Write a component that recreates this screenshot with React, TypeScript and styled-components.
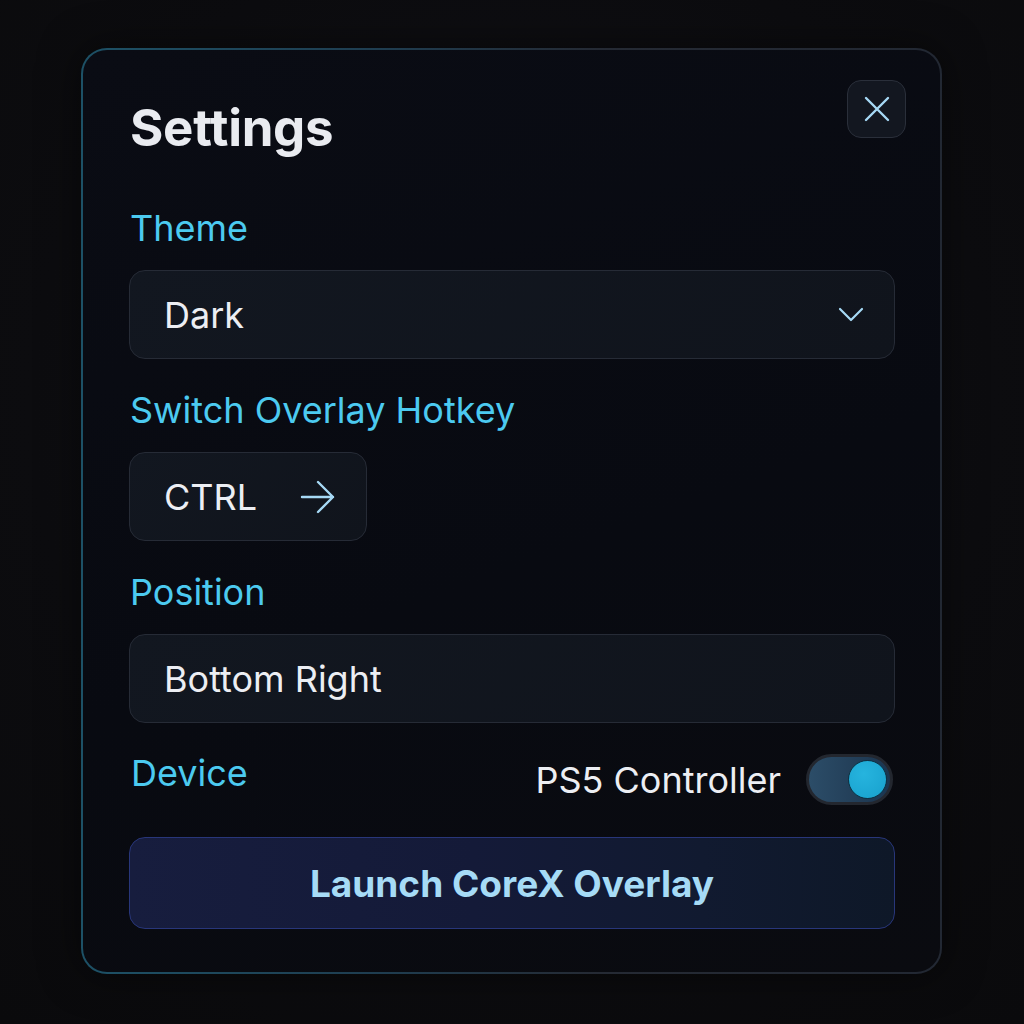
import styled, { createGlobalStyle } from "styled-components";

const GlobalStyle = createGlobalStyle`
  html, body {
    margin: 0;
    padding: 0;
    background: #0c0c0f;
  }
  body {
    font-family: Inter, "Noto Sans", "Liberation Sans", sans-serif;
    -webkit-font-smoothing: antialiased;
  }
`;

const S = {
  Page: styled.div`
    width: 1024px;
    height: 1024px;
    padding: 48px 0 0 81px;
    box-sizing: border-box;
    background: radial-gradient(circle at 50% 40%, #111116 0%, #0c0c0f 60%, #0a0a0c 100%);
  `,
  Card: styled.div`
    position: relative;
    width: 861px;
    height: 926px;
    box-sizing: border-box;
    padding: 48px 45px 0 46px;
    border-radius: 26px;
    border: 2px solid transparent;
    background:
      linear-gradient(160deg, #0a0c14 0%, #080a11 55%, #0a0b10 100%) padding-box,
      linear-gradient(90deg, #1d5166 0%, #1f3d50 35%, #252a34 60%, #222833 100%) border-box;
    box-shadow: 0 0 40px rgba(0, 0, 0, 0.5);
  `,
  Title: styled.h1`
    margin: 0 0 0 1px;
    font-size: 51px;
    line-height: 60px;
    font-weight: 700;
    letter-spacing: -0.3px;
    color: #e9ebf0;
  `,
  CloseButton: styled.button`
    position: absolute;
    top: 30px;
    right: 34px;
    width: 59px;
    height: 58px;
    display: flex;
    align-items: center;
    justify-content: center;
    padding: 0;
    border-radius: 14px;
    border: 1.5px solid #2a2f3a;
    background: #131720;
    cursor: pointer;
  `,
  Label: styled.div<{ $top: number }>`
    margin-top: ${(p) => p.$top}px;
    padding-left: 1px;
    font-size: 36px;
    line-height: 44px;
    font-weight: 400;
    color: #4ccaf0;
  `,
  Field: styled.div<{ $width?: number }>`
    margin-top: 20px;
    width: ${(p) => (p.$width ? `${p.$width}px` : "100%")};
    height: 89px;
    box-sizing: border-box;
    display: flex;
    align-items: center;
    justify-content: space-between;
    padding: 0 30px 0 34px;
    border-radius: 16px;
    border: 1.5px solid #262b36;
    background: linear-gradient(135deg, #121720 0%, #10141c 100%);
    font-size: 36px;
    color: #eceef3;
  `,
  DeviceRow: styled.div`
    margin-top: 28px;
    display: flex;
    align-items: flex-start;
    justify-content: space-between;
  `,
  DeviceLabel: styled.div`
    padding-left: 2px;
    font-size: 36px;
    line-height: 44px;
    color: #4ccaf0;
  `,
  DeviceRight: styled.div`
    margin-top: 3px;
    margin-right: 2px;
    display: flex;
    align-items: center;
    gap: 25px;
  `,
  DeviceName: styled.span`
    font-size: 36px;
    line-height: 44px;
    color: #eceef3;
  `,
  Toggle: styled.div`
    width: 87px;
    height: 51px;
    box-sizing: border-box;
    border-radius: 26px;
    border: 3px solid #23272f;
    background: linear-gradient(90deg, #2c4d68 0%, #233f59 55%, #1b3550 100%);
    display: flex;
    align-items: center;
    justify-content: flex-end;
    padding-right: 3px;
  `,
  Knob: styled.div`
    width: 39px;
    height: 39px;
    box-sizing: border-box;
    border-radius: 50%;
    border: 1.5px solid #0b3244;
    background: radial-gradient(circle at 40% 35%, #26b4de 0%, #1ca6d2 70%, #1a9cc6 100%);
  `,
  LaunchButton: styled.button`
    margin-top: 32px;
    width: 100%;
    height: 92px;
    border-radius: 16px;
    border: 1.5px solid #28367a;
    background: linear-gradient(90deg, #171d3e 0%, #141a38 45%, #111a30 75%, #0e1828 100%);
    font-family: inherit;
    font-size: 37px;
    font-weight: 700;
    color: #a6dbf6;
    cursor: pointer;
  `,
};

function CloseIcon() {
  return (
    <svg width="26" height="26" viewBox="0 0 26 26" fill="none">
      <path d="M2 2 L24 24 M24 2 L2 24" stroke="#a6d9f5" strokeWidth="2.4" strokeLinecap="round" />
    </svg>
  );
}

function ChevronIcon() {
  return (
    <svg width="26" height="16" viewBox="0 0 26 16" fill="none">
      <path d="M2 2 L13 13 L24 2" stroke="#a6d9f5" strokeWidth="2.2" strokeLinecap="round" strokeLinejoin="round" />
    </svg>
  );
}

function ArrowIcon() {
  return (
    <svg width="36" height="34" viewBox="0 0 36 34" fill="none">
      <path
        d="M2 17 H33 M18 2 L33 17 L18 32"
        stroke="#a6d9f5"
        strokeWidth="2.4"
        strokeLinecap="round"
        strokeLinejoin="round"
      />
    </svg>
  );
}

export default function App() {
  return (
    <>
      <GlobalStyle />
      <S.Page>
        <S.Card>
          <S.Title>Settings</S.Title>
          <S.CloseButton aria-label="Close">
            <CloseIcon />
          </S.CloseButton>

          <S.Label $top={48}>Theme</S.Label>
          <S.Field>
            <span>Dark</span>
            <ChevronIcon />
          </S.Field>

          <S.Label $top={29}>Switch Overlay Hotkey</S.Label>
          <S.Field $width={238}>
            <span>CTRL</span>
            <ArrowIcon />
          </S.Field>

          <S.Label $top={29}>Position</S.Label>
          <S.Field>
            <span>Bottom Right</span>
          </S.Field>

          <S.DeviceRow>
            <S.DeviceLabel>Device</S.DeviceLabel>
            <S.DeviceRight>
              <S.DeviceName>PS5 Controller</S.DeviceName>
              <S.Toggle>
                <S.Knob />
              </S.Toggle>
            </S.DeviceRight>
          </S.DeviceRow>

          <S.LaunchButton>Launch CoreX Overlay</S.LaunchButton>
        </S.Card>
      </S.Page>
    </>
  );
}
